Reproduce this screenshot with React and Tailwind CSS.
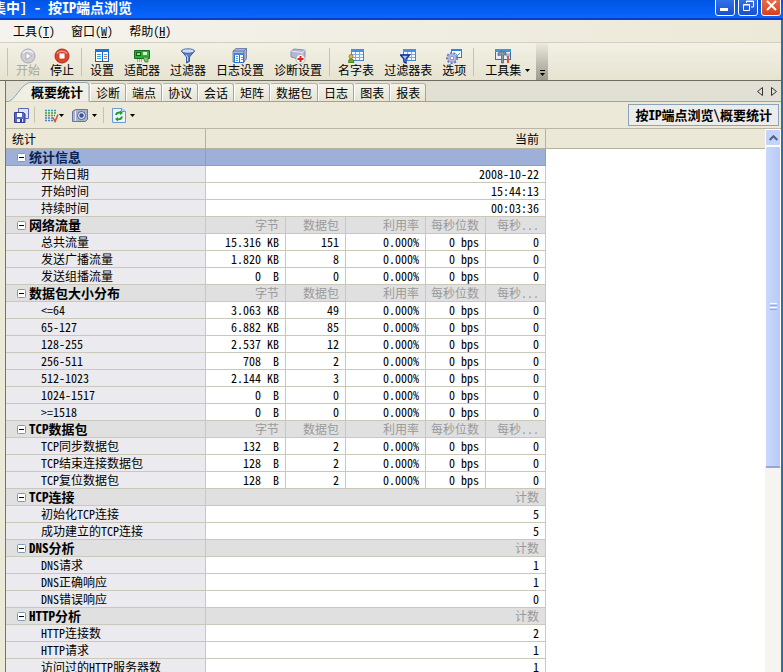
import React, { useState } from "react";

const StartIcon = () => (
  <svg width="16" height="16" viewBox="0 0 16 16">
    <circle cx="8" cy="8" r="7" fill="#cfcdd6" stroke="#a9a7b5" />
    <path d="M3 5a6 5 0 0110 0" fill="none" stroke="#ecebf0" strokeWidth="2" />
    <path d="M6 4.5l5.5 3.5L6 11.5z" fill="#fff" stroke="#9c9aab" strokeWidth="0.7" />
  </svg>
);
const StopIcon = () => (
  <svg width="16" height="16" viewBox="0 0 16 16">
    <circle cx="8" cy="8" r="7" fill="#e2432b" stroke="#a82f1d" />
    <path d="M3 5.5a6 5 0 0110 0" fill="none" stroke="#f59a82" strokeWidth="1.6" />
    <rect x="5" y="5" width="6" height="6" fill="#fff" stroke="#b63a25" strokeWidth="0.8" />
  </svg>
);
const SettingsIcon = () => (
  <svg width="16" height="16" viewBox="0 0 16 16">
    <rect x="1.5" y="1.5" width="13" height="12" fill="#fff" stroke="#1461c4" />
    <rect x="1" y="1" width="14" height="3" fill="#1c72df" />
    <path d="M3 6.500h4M3 8.500h4M3 10.500h4" stroke="#3f9be0" />
    <path d="M8.500 4v9" stroke="#1461c4" />
    <path d="M10 6.500h3" stroke="#5f93cf" />
    <path d="M10 8.500h3" stroke="#e0702c" />
    <path d="M10 10.500h3" stroke="#5f93cf" />
  </svg>
);
const AdapterIcon = () => (
  <svg width="16" height="16" viewBox="0 0 16 16">
    <path d="M0.500 2.500h15v8h-15z" fill="#35ab3a" stroke="#146c1d" />
    <rect x="2" y="4" width="5" height="4" fill="#145f1f" />
    <rect x="3" y="5" width="3" height="2" fill="#8fe08f" />
    <rect x="9" y="4" width="4" height="3" fill="#d8f5cf" />
    <path d="M3.500 11v3M5.500 11v3M7.500 11v3" stroke="#d3a62a" />
    <path d="M9 9h5v5h-3z" fill="#7cc96a" stroke="#26752a" strokeWidth="0.7" />
  </svg>
);
const FilterIcon = () => (
  <svg width="16" height="16" viewBox="0 0 16 16">
    <path d="M1.500 3l5 6v6l3-1.500V9l5-6z" fill="#5d82c7" stroke="#2e4f94" strokeWidth="0.9" />
    <ellipse cx="8" cy="3" rx="6.500" ry="2.200" fill="#cfdcf4" stroke="#3d5fa5" strokeWidth="0.9" />
    <path d="M6 7l1.500 2v4" fill="none" stroke="#c9d8f3" />
  </svg>
);
const LogIcon = () => (
  <svg width="16" height="16" viewBox="0 0 16 16">
    <path d="M1 3l3-2.500h10.500v10L12 14H1z" fill="#a9b5d8" stroke="#5d6c9d" strokeWidth="0.8" />
    <path d="M1 3h11v11M12 3l2.500-2.500" fill="none" stroke="#5d6c9d" strokeWidth="0.8" />
    <rect x="2.500" y="5.500" width="9" height="9" fill="#fff" stroke="#2b71cc" />
    <rect x="2" y="5" width="10" height="2" fill="#3b86e0" />
    <path d="M4 8.500h2M4 10.500h2M4 12.500h2" stroke="#3f9be0" />
    <path d="M7.500 7v7" stroke="#2b71cc" />
    <path d="M9 9.500h2M9 11.500h2" stroke="#df7a34" />
  </svg>
);
const DiagnoseIcon = () => (
  <svg width="16" height="16" viewBox="0 0 16 16">
    <path d="M1 3l3-2 11 1v7l-3 3-11-3z" fill="#b3b6d6" stroke="#7a7faa" strokeWidth="0.8" />
    <path d="M1 3l11 1.500V11M12 4.500L15 2" fill="none" stroke="#e6e7f3" />
    <circle cx="10.500" cy="11" r="4.500" fill="#fff" stroke="#a8a5a5" strokeWidth="0.8" />
    <path d="M10.500 8v6M7.500 11h6" stroke="#e01f1f" strokeWidth="2" />
  </svg>
);
const Sheet = () => (
  <g>
    <rect x="3.500" y="1.500" width="12" height="11" fill="#f4f9ff" stroke="#4a83cf" />
    <rect x="3" y="1" width="13" height="3" fill="#4b8ee2" />
    <path d="M4 6.500h11M4 9.500h11M7.500 4v8M11.500 4v8" stroke="#86abdf" />
  </g>
);
const NameTableIcon = () => (
  <svg width="16" height="16" viewBox="0 0 16 16">
    <Sheet />
    <path d="M0.500 14.500q0-4 2.500-4t3 4z" fill="#5fae2e" stroke="#3b7819" strokeWidth="0.8" />
    <circle cx="3" cy="8.500" r="2" fill="#e3b93c" stroke="#94701a" strokeWidth="0.8" />
  </svg>
);
const FilterTableIcon = () => (
  <svg width="16" height="16" viewBox="0 0 16 16">
    <Sheet />
    <path d="M0.500 7h9L6 11v4l-2-1v-3z" fill="#9fc3ff" stroke="#0d2b9a" strokeWidth="1.300" />
  </svg>
);
const OptionsIcon = () => (
  <svg width="16" height="16" viewBox="0 0 16 16">
    <rect x="5.500" y="1.500" width="10" height="8" fill="#fff" stroke="#2b78d0" />
    <rect x="5" y="1" width="11" height="2" fill="#2f83e0" />
    <path d="M10 6l1.500 1.500L14 5" fill="none" stroke="#3b9cde" />
    <circle cx="6" cy="10" r="5" fill="none" stroke="#6d77b8" strokeWidth="2" strokeDasharray="2 1.500" />
    <circle cx="6" cy="10" r="4.300" fill="#b6bde4" stroke="#8089c4" strokeWidth="0.8" />
    <circle cx="6" cy="10" r="1.800" fill="#fff" stroke="#6d77b8" strokeWidth="0.8" />
  </svg>
);
const ToolsIcon = () => (
  <svg width="16" height="16" viewBox="0 0 16 16">
    <rect x="0.500" y="1.500" width="15" height="10" fill="#e4f1fc" stroke="#2a76bd" />
    <rect x="0" y="1" width="16" height="3" fill="#3f97d6" />
    <path d="M3 5l3-1.500 5 1V7H8.500v8h-2V7L3 7.500z" fill="#8a97a8" stroke="#4c596c" strokeWidth="0.7" />
    <path d="M12 5.500v3M14 5.500v3" stroke="#69778b" />
    <path d="M13 8v7" stroke="#cf5a35" strokeWidth="2" />
  </svg>
);
const SaveIcon = () => (
  <svg width="15" height="15" viewBox="0 0 15 15">
    <path d="M4.500 0.500h10v10h-10z" fill="#dfe4f8" stroke="#5b67b5" />
    <path d="M0.500 4.500h9l1.500 1.500v8.500H0.500z" fill="#5a68c3" stroke="#333f92" />
    <rect x="3" y="5" width="5" height="4" fill="#fff" />
    <rect x="3" y="11" width="6" height="3" fill="#eceefb" />
    <rect x="6" y="11" width="2" height="3" fill="#333f92" />
  </svg>
);
const ListIcon = () => (
  <svg width="15" height="15" viewBox="0 0 15 15">
    <path d="M1 2.500h12" stroke="#2d9ab5" strokeWidth="1.400" strokeDasharray="2 1" />
    <path d="M1 5h12M1 7.500h10" stroke="#36a04f" strokeWidth="1.400" strokeDasharray="2 1" />
    <path d="M1 10h8M1 12.500h8" stroke="#3f7fd0" strokeWidth="1.400" strokeDasharray="2 1" />
    <path d="M9 9.500l2 4 3-7" fill="none" stroke="#e2493b" strokeWidth="1.500" />
  </svg>
);
const CameraIcon = () => (
  <svg width="16" height="15" viewBox="0 0 16 15">
    <path d="M0.500 3.500l3-2h12v10l-2 2h-13z" fill="#a9b1cf" stroke="#6a749d" />
    <path d="M3.500 3v10" stroke="#e9ebf5" />
    <circle cx="9.500" cy="7.500" r="4" fill="#e3e7f5" stroke="#54608f" />
    <circle cx="9.500" cy="7.500" r="2.200" fill="#34549c" />
  </svg>
);
const RefreshIcon = () => (
  <svg width="14" height="15" viewBox="0 0 14 15">
    <path d="M0.500 0.500h9l4 3v11H0.500z" fill="#eef5ff" stroke="#6b98d8" />
    <path d="M9.500 0.500v3h4" fill="#b9d2f4" stroke="#6b98d8" />
    <path d="M4 7q0.500-2.500 3.500-2.500h1" fill="none" stroke="#1c9c2c" strokeWidth="1.800" />
    <path d="M8 2.500L11 5 8 7z" fill="#1c9c2c" />
    <path d="M10 8.500q-0.500 2.800-3.500 2.800h-1" fill="none" stroke="#1c9c2c" strokeWidth="1.800" />
    <path d="M6 13.500L3 11l3-2z" fill="#1c9c2c" />
  </svg>
);
const Caret = () => <svg width="5" height="3" viewBox="0 0 5 3"><path d="M0 0h5L2.500 3z" fill="#000" /></svg>;

const MENUS = [["工具", "T"], ["窗口", "W"], ["帮助", "H"]];

const TOOL_GROUPS = [
  [
    { label: "开始", icon: StartIcon, disabled: true },
    { label: "停止", icon: StopIcon },
  ],
  [
    { label: "设置", icon: SettingsIcon },
    { label: "适配器", icon: AdapterIcon },
    { label: "过滤器", icon: FilterIcon },
    { label: "日志设置", icon: LogIcon },
    { label: "诊断设置", icon: DiagnoseIcon },
  ],
  [
    { label: "名字表", icon: NameTableIcon },
    { label: "过滤器表", icon: FilterTableIcon },
    { label: "选项", icon: OptionsIcon },
  ],
];

const TABS = ["诊断", "端点", "协议", "会话", "矩阵", "数据包", "日志", "图表", "报表"];

const TRAFFIC = ["字节", "数据包", "利用率", "每秒位数", "每秒..."];
const traffic = (label, bytes, packets) => [label, [bytes, packets, "0.000%", "0 bps", "0"]];

const SECTIONS = [
  {
    title: "统计信息",
    heads: [""],
    rows: [["开始日期", ["2008-10-22"]], ["开始时间", ["15:44:13"]], ["持续时间", ["00:03:36"]]],
  },
  {
    title: "网络流量",
    heads: TRAFFIC,
    rows: [
      traffic("总共流量", "15.316 KB", "151"),
      traffic("发送广播流量", "1.820 KB", "8"),
      traffic("发送组播流量", "0  B", "0"),
    ],
  },
  {
    title: "数据包大小分布",
    heads: TRAFFIC,
    rows: [
      traffic("<=64", "3.063 KB", "49"),
      traffic("65-127", "6.882 KB", "85"),
      traffic("128-255", "2.537 KB", "12"),
      traffic("256-511", "708  B", "2"),
      traffic("512-1023", "2.144 KB", "3"),
      traffic("1024-1517", "0  B", "0"),
      traffic(">=1518", "0  B", "0"),
    ],
  },
  {
    title: "TCP数据包",
    heads: TRAFFIC,
    rows: [
      traffic("TCP同步数据包", "132  B", "2"),
      traffic("TCP结束连接数据包", "128  B", "2"),
      traffic("TCP复位数据包", "128  B", "2"),
    ],
  },
  {
    title: "TCP连接",
    heads: ["计数"],
    rows: [["初始化TCP连接", ["5"]], ["成功建立的TCP连接", ["5"]]],
  },
  {
    title: "DNS分析",
    heads: ["计数"],
    rows: [["DNS请求", ["1"]], ["DNS正确响应", ["1"]], ["DNS错误响应", ["0"]]],
  },
  {
    title: "HTTP分析",
    heads: ["计数"],
    rows: [["HTTP连接数", ["2"]], ["HTTP请求", ["1"]], ["访问过的HTTP服务器数", ["1"]]],
  },
];

function TitleBar() {
  return (
    <div className="flex h-5 shrink-0 items-start justify-between overflow-hidden border-b-2 border-[#0a3fc4] bg-linear-to-b from-[#0054e3] to-[#0a66ff]">
      <h1 className="-ml-2 whitespace-pre text-sm leading-[14px] font-bold text-white">集中] - 按IP端点浏览</h1>
      <div className="-mt-1.5 flex gap-[3px] pr-0.5">
        <button aria-label="最小化" className="flex h-[22px] w-5 items-end rounded-[3px] border border-white bg-linear-to-b from-[#3a7cf0] to-[#1a4fd0] px-1 pb-1">
          <span className="h-[3px] w-2 bg-white" />
        </button>
        <button aria-label="还原" className="flex h-[22px] w-5 items-end justify-center rounded-[3px] border border-white bg-linear-to-b from-[#3a7cf0] to-[#1a4fd0] pb-1">
          <svg width="11" height="11" viewBox="0 0 11 11" fill="none" stroke="#fff">
            <path d="M3.500 3V1h7v6H8M3 1.500h8" />
            <path d="M0.500 4.500h6v6h-6zM0 5h7" />
          </svg>
        </button>
        <button aria-label="关闭" className="flex h-[22px] w-5 items-end justify-center rounded-[3px] border border-white bg-linear-to-b from-[#ea7a58] to-[#d4401c] pb-1">
          <svg width="11" height="11" viewBox="0 0 11 11" stroke="#fff" strokeWidth="2"><path d="M1 1l9 9M10 1l-9 9" /></svg>
        </button>
      </div>
    </div>
  );
}

function ToolButton({ label, icon: Icon, disabled }) {
  return (
    <button disabled={disabled} className="flex flex-col items-center px-[5px] disabled:text-[#aca899]">
      <Icon />
      <span className="leading-3">{label}</span>
    </button>
  );
}

const Divider = () => <span className="mr-[3px] ml-0.5 h-7 w-px bg-[#c5c2b2]" />;

function MainToolbar() {
  return (
    <div className="flex h-[38px] shrink-0 items-center border-b border-[#6f6d62] bg-linear-to-b from-[#f3f1e6] to-[#e6e3d0] pl-[5px]">
      {TOOL_GROUPS.map((group, i) => (
        <React.Fragment key={i}>
          <Divider />
          {group.map((tool) => <ToolButton key={tool.label} {...tool} />)}
        </React.Fragment>
      ))}
      <Divider />
      <button className="flex items-end gap-1 pr-1.5 pl-2">
        <span className="flex flex-col items-center">
          <ToolsIcon />
          <span className="leading-3">工具集</span>
        </span>
        <span className="pb-1"><Caret /></span>
      </button>
      <button aria-label="工具栏选项" className="flex h-full w-3 flex-col items-center justify-end gap-0.5 bg-linear-to-b from-[#eceade] to-[#9c9a8c] pb-1">
        <span className="h-px w-[5px] bg-black" />
        <Caret />
      </button>
    </div>
  );
}

function TabBar() {
  return (
    <div className="flex h-[21px] shrink-0 items-end border-b border-[#8fa5b5] bg-[#e2e0d4]">
      <button className="relative -mb-px h-5 pr-[7px] pl-[25px] text-[13px] font-bold">
        <svg className="absolute inset-0 h-full w-full" viewBox="0 0 86 20" preserveAspectRatio="none">
          <path d="M0 19.500h3Q7 18 12 11 19 1 25 0.500h57q3 0 3 3V20H0z" fill="#f1efe4" stroke="#8fa5b5" />
          <path d="M3 20h82" stroke="#f1efe4" />
        </svg>
        <span className="relative">概要统计</span>
      </button>
      {TABS.map((tab) => (
        <button key={tab} className="h-[18px] rounded-t-[3px] border border-b-0 border-l-white border-t-[#b5b29f] border-r-[#a9a696] bg-linear-to-b from-[#f6f4ea] to-[#e6e3d2] px-[5px] leading-4">
          {tab}
        </button>
      ))}
      <div className="ml-auto flex gap-2 self-center pr-1">
        <button aria-label="向左">
          <svg width="6" height="9" viewBox="0 0 6 9"><path d="M5.500 0.500v8l-5-4z" fill="none" stroke="#333" /></svg>
        </button>
        <button aria-label="向右">
          <svg width="6" height="9" viewBox="0 0 6 9"><path d="M0.500 0.500v8l5-4z" fill="none" stroke="#333" /></svg>
        </button>
      </div>
    </div>
  );
}

function ViewToolbar() {
  return (
    <div className="flex h-[27px] shrink-0 items-center border-b border-[#b9b6a3] bg-[#ece9d8] pr-0.5 pl-2">
      <button aria-label="保存"><SaveIcon /></button>
      <span className="mx-[5px] h-4 w-px bg-[#c5c2b2]" />
      <button aria-label="列表" className="ml-1 flex items-center"><ListIcon /><Caret /></button>
      <button aria-label="快照" className="ml-2 flex items-center gap-1"><CameraIcon /><Caret /></button>
      <span className="mx-1.5 h-4 w-px bg-[#c5c2b2]" />
      <button aria-label="刷新" className="ml-0.5 flex items-center gap-1"><RefreshIcon /><Caret /></button>
      <div className="ml-auto border border-[#8ba3b8] bg-[#ececea] px-1.5 text-[13px] leading-5 font-bold whitespace-nowrap">
        按IP端点浏览\概要统计
      </div>
    </div>
  );
}

const spanFor = (cells) => (cells.length === 1 ? 5 : 1);

function Section({ title, heads, rows, selected, open, onToggle }) {
  const tone = selected ? "border-[#8d9dc6] bg-[#9eafd8]" : "border-[#c9c8ba] bg-[#e0e0e0]";
  return (
    <tbody>
      <tr>
        <th scope="rowgroup" className={`h-[17px] border-r border-b p-0 text-left text-[13px] leading-4 ${tone} ${selected ? "text-[#0c2350]" : ""}`}>
          <button onClick={onToggle} aria-expanded={open} className="flex h-4 items-center gap-[3px] pl-[11px]">
            <svg width="9" height="9" viewBox="0 0 9 9">
              <rect x="0.500" y="0.500" width="8" height="8" rx="1" fill="#fff" stroke="#7b98b8" />
              <path d={open ? "M2 4.500h5" : "M2 4.500h5M4.500 2v5"} stroke="#000" />
            </svg>
            {title}
          </button>
        </th>
        {heads.map((head, i) => (
          <th key={i} scope="col" colSpan={spanFor(heads)} className={`h-[17px] border-r border-b py-0 pr-1.5 pl-0 text-right leading-4 font-normal whitespace-nowrap text-[#9a9a9a] ${tone}`}>
            {head}
          </th>
        ))}
      </tr>
      {open && rows.map(([label, values]) => (
        <tr key={label}>
          <th scope="row" className="h-[17px] border-r border-b border-[#c9c8ba] bg-[#ebebef] py-0 pr-0 pl-[35px] text-left leading-4 font-normal">
            {label}
          </th>
          {values.map((value, i) => (
            <td key={i} colSpan={spanFor(values)} className="h-[17px] border-r border-b border-[#c9c8ba] bg-white py-0 pr-1.5 pl-0 text-right leading-4 whitespace-pre">
              {value}
            </td>
          ))}
        </tr>
      ))}
    </tbody>
  );
}

function StatsTable() {
  const [closed, setClosed] = useState({});
  return (
    <table className="w-[540px] shrink-0 table-fixed border-separate border-spacing-0 self-start">
      <colgroup>
        <col className="w-[200px]" />
        <col className="w-20" />
        <col className="w-15" />
        <col className="w-20" />
        <col className="w-15" />
        <col className="w-15" />
      </colgroup>
      <thead>
        <tr className="bg-[#ebe8d7]">
          <th scope="col" className="h-5 border-r border-b border-[#b5b29f] py-0 pr-0 pl-1.5 text-left font-normal">统计</th>
          <th scope="col" colSpan={5} className="h-5 border-r border-b border-[#b5b29f] py-0 pr-1.5 pl-0 text-right font-normal">当前</th>
        </tr>
      </thead>
      {SECTIONS.map((section, i) => (
        <Section
          key={section.title}
          {...section}
          selected={i === 0}
          open={!closed[i]}
          onToggle={() => setClosed({ ...closed, [i]: !closed[i] })}
        />
      ))}
    </table>
  );
}

function ScrollBar() {
  return (
    <div className="flex w-4 shrink-0 flex-col bg-[#f5f4ee]">
      <button aria-label="向上滚动" className="flex h-[17px] shrink-0 items-center justify-center rounded-xs border border-white bg-[#c3d3fb]">
        <svg width="9" height="6" viewBox="0 0 9 6" fill="none" stroke="#4d6185" strokeWidth="2"><path d="M0.700 5l3.800-3.800L8.300 5" /></svg>
      </button>
      <div className="flex flex-[61] flex-col items-center justify-center gap-px rounded-xs border border-b-2 border-white border-b-[#8fa8d8] bg-linear-to-r from-[#c9d8fc] to-[#b9cbf6]">
        <span className="h-px w-[7px] bg-white" />
        <span className="h-px w-[7px] bg-[#8fa9ea]" />
        <span className="h-px w-[7px] bg-white" />
        <span className="h-px w-[7px] bg-[#8fa9ea]" />
      </div>
      <div className="flex-[39]" />
    </div>
  );
}

// "hwid" picks the font's half-width latin glyphs, so numbers line up with the CJK grid
export default function App() {
  return (
    <div className="flex h-screen flex-col overflow-hidden bg-[#ece9d8] font-['Noto_Sans_CJK_SC',sans-serif] text-xs text-black [font-feature-settings:'hwid']">
      <TitleBar />
      <div className="flex min-h-0 flex-1 flex-col border-r-2 border-[#2f6ea0]">
        <nav className="flex h-[23px] shrink-0 items-center border-b border-[#d3d0bf] bg-linear-to-r from-[#f4f3ee] to-[#ece9d8] pl-[5px]">
          {MENUS.map(([name, key]) => (
            <button key={key} className="px-2">
              {name}(<u>{key}</u>)
            </button>
          ))}
        </nav>
        <MainToolbar />
        <div className="flex min-h-0 flex-1 flex-col pl-[5px]">
          <div className="flex min-h-0 flex-1 flex-col border-l border-[#77756a]">
            <TabBar />
            <ViewToolbar />
            <div className="flex min-h-0 flex-1 overflow-hidden bg-white">
              <StatsTable />
              <div className="h-5 flex-1 border-b border-[#b5b29f] bg-[#ebe8d7]" />
              <ScrollBar />
            </div>
          </div>
        </div>
      </div>
    </div>
  );
}
